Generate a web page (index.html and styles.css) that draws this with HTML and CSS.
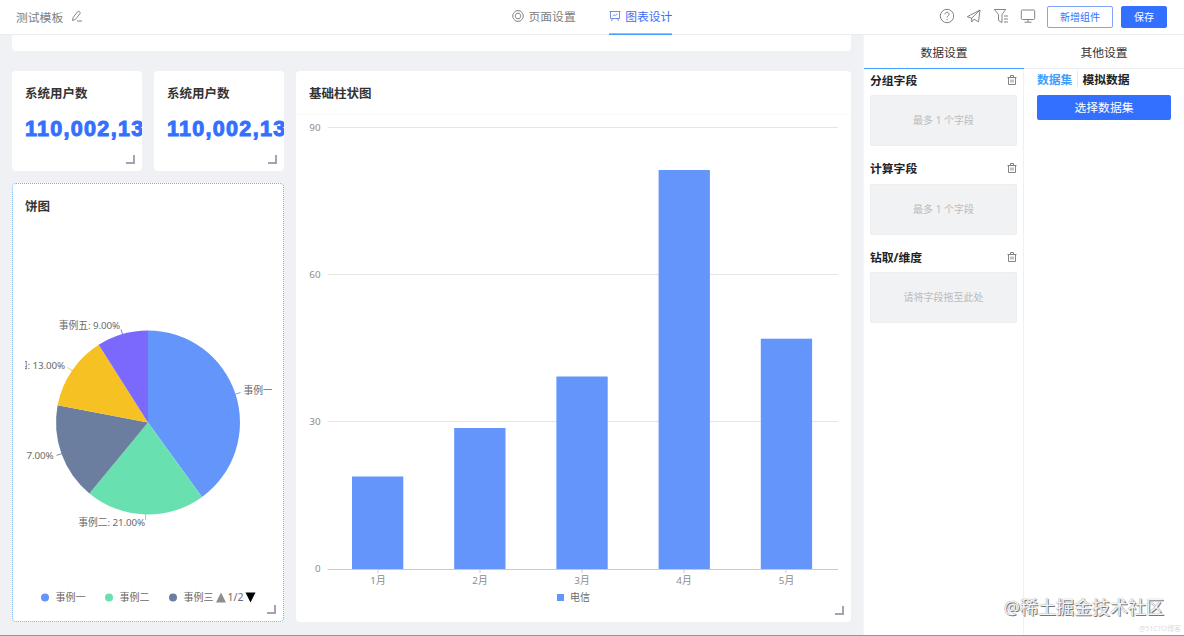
FILE: index.html
```html
<!DOCTYPE html>
<html lang="zh-CN">
<head>
    <meta charset="UTF-8">
    <meta name="viewport" content="width=device-width, initial-scale=1.0">
    <title>测试模板</title>
    <link rel="stylesheet" href="styles.css">
</head>
<body>
    <header class="header">
        <div class="template-name">
            <span>测试模板</span>
            <svg class="icon-edit" viewBox="0 0 12 12"><path d="M1.5 10.5l.7-3.2L6.8 1.5q.5-.5 1.2 0l1 .8q.6.5.1 1.200L4.500 9.300zM6 11h5"/></svg>
        </div>
        <nav class="nav">
            <a class="nav-item">
                <svg viewBox="0 0 12 12"><path d="M3.700.8h4.600l1.200 1.500 1.700 2.200v3L9.500 9.700l-1.200 1.500H3.700L2.500 9.700.8 7.500v-3l1.700-2.200z"/><path d="M4.500 3.300h3L9 6 7.500 8.700h-3L3 6z"/></svg>
                <span>页面设置</span>
            </a>
            <a class="nav-item active">
                <svg viewBox="0 0 12 12"><path d="M.5 1.500h11M1.500 1.500v7h9v-7M3.500 8.500l-1 2.500M8.500 8.500l1 2.500M3.500 6.200l1.700-1.500 1.300 1 2-2"/></svg>
                <span>图表设计</span>
            </a>
        </nav>
        <div class="actions">
            <svg viewBox="0 0 16 16"><circle cx="8" cy="8" r="6.700"/><path d="M5.900 6.300c0-2.700 4.200-2.600 4.200 0 0 1.600-2.100 1.500-2.100 3.200M8 11v1.200"/></svg>
            <svg viewBox="0 0 16 16"><path d="M1.300 8.700L14 2l-1.500 11.800-4.500-2.600-2.300 2.800v-3.800zM5.700 10.200L14 2"/></svg>
            <svg viewBox="0 0 16 16"><path d="M1.300 1.500h11.400L9 6.500v8L5.500 12.500v-6zM11 8h4M11 11h4M11 14h4"/></svg>
            <svg viewBox="0 0 16 16"><rect x="1.300" y="2" width="13.400" height="9.500" rx="1.200"/><path d="M8 11.500V14M4.500 14.200h7"/></svg>
            <button class="btn btn-plain">新增组件</button>
            <button class="btn btn-primary">保存</button>
        </div>
    </header>

    <main class="main">
        <section class="canvas">
            <div class="card card-top"></div>
            <div class="board">
                <div class="card stat">
                    <h3>系统用户数</h3>
                    <p class="stat-value">110,002,13</p>
                    <i class="resize"></i>
                </div>
                <div class="card stat">
                    <h3>系统用户数</h3>
                    <p class="stat-value">110,002,13</p>
                    <i class="resize"></i>
                </div>
                <div class="card pie-card">
                    <h3>饼图</h3>
                    <svg class="pie" viewBox="0 0 247 390">
                        <g transform="translate(123 202.5)">
                            <path class="c1" d="M0 0V-92A92 92 0 0 1 54.1 74.400z"/>
                            <path class="c2" d="M0 0L54.100 74.400A92 92 0 0 1-58.600 70.900z"/>
                            <path class="c3" d="M0 0L-58.600 70.900A92 92 0 0 1-90.400-17.200z"/>
                            <path class="c4" d="M0 0L-90.400-17.200A92 92 0 0 1-49.300-77.700z"/>
                            <path class="c5" d="M0 0L-49.300-77.700A92 92 0 0 1 0-92z"/>
                            <path class="lead l1" d="M87.500-28.400l5-1.600"/>
                            <path class="lead l2" d="M-2.500 92v5.500"/>
                            <path class="lead l3" d="M-86.500 31.300l-5 1.500"/>
                            <path class="lead l4" d="M-76-52l-4.500-3"/>
                            <path class="lead l5" d="M-25.500-88.500l-1.500-4.500"/>
                        </g>
                        <g class="pie-label">
                            <text x="218.500" y="174">事例一</text>
                            <text x="120" y="305.500" text-anchor="end">事例二: 21.00%</text>
                            <text x="28.500" y="239" text-anchor="end">7.00%</text>
                            <text x="40" y="149" text-anchor="end">事例四: 13.00%</text>
                            <text x="95" y="109" text-anchor="end">事例五: 9.00%</text>
                        </g>
                        <g class="legend">
                            <circle class="c1" cx="20" cy="377.500" r="4"/>
                            <text x="30.500" y="381">事例一</text>
                            <circle class="c2" cx="84" cy="377.500" r="4"/>
                            <text x="94.500" y="381">事例二</text>
                            <circle class="c3" cx="148" cy="377.500" r="4"/>
                            <text x="158.500" y="381">事例三</text>
                            <path class="prev" d="M191 382.500l5-10 5 10z"/>
                            <text class="page" x="202.500" y="381">1/2</text>
                            <path class="next" d="M220.500 372.500h10l-5 10z"/>
                        </g>
                    </svg>
                    <i class="resize"></i>
                </div>
                <div class="card bar-card">
                    <h3>基础柱状图</h3>
                    <svg class="bars" viewBox="0 0 555 507">
                        <path class="grid" d="M31.500 12.500H542M31.500 159.500H542M31.500 306.500H542"/>
                        <path class="axis" d="M31.500 454.500H542M82 454v4M184 454v4M286 454v4M388 454v4M490 454v4"/>
                        <g class="c1">
                            <rect x="56" y="361.500" width="51.300" height="92.500"/>
                            <rect x="158.200" y="313" width="51.300" height="141"/>
                            <rect x="260.400" y="261.500" width="51.300" height="192.500"/>
                            <rect x="362.600" y="55" width="51.300" height="399"/>
                            <rect x="464.800" y="223.700" width="51.300" height="230.300"/>
                        </g>
                        <g class="tick" text-anchor="end">
                            <text x="24.500" y="16">90</text>
                            <text x="24.500" y="163">60</text>
                            <text x="24.500" y="310">30</text>
                            <text x="24.500" y="457">0</text>
                        </g>
                        <g class="tick" text-anchor="middle">
                            <text x="82" y="469">1月</text>
                            <text x="184" y="469">2月</text>
                            <text x="286" y="469">3月</text>
                            <text x="388" y="469">4月</text>
                            <text x="490.500" y="469">5月</text>
                        </g>
                        <g class="legend">
                            <rect class="c1" x="261" y="479" width="7" height="7"/>
                            <text x="274" y="486">电信</text>
                        </g>
                    </svg>
                    <i class="resize"></i>
                </div>
            </div>
        </section>

        <aside class="panel">
            <div class="panel-tabs">
                <div class="panel-tab active">数据设置</div>
                <div class="panel-tab">其他设置</div>
            </div>
            <div class="panel-body">
                <div class="fields">
                    <div class="field">
                        <div class="field-head">
                            <span>分组字段</span>
                            <svg viewBox="0 0 10 10"><path d="M.5 2.500h9M3.500 2.500v-2h3v2M1.500 2.500v7h7v-7M4 4.500v3M6 4.500v3"/></svg>
                        </div>
                        <div class="drop">最多 1 个字段</div>
                    </div>
                    <div class="field">
                        <div class="field-head">
                            <span>计算字段</span>
                            <svg viewBox="0 0 10 10"><path d="M.5 2.500h9M3.500 2.500v-2h3v2M1.500 2.500v7h7v-7M4 4.500v3M6 4.500v3"/></svg>
                        </div>
                        <div class="drop">最多 1 个字段</div>
                    </div>
                    <div class="field">
                        <div class="field-head">
                            <span>钻取/维度</span>
                            <svg viewBox="0 0 10 10"><path d="M.5 2.500h9M3.500 2.500v-2h3v2M1.500 2.500v7h7v-7M4 4.500v3M6 4.500v3"/></svg>
                        </div>
                        <div class="drop">请将字段拖至此处</div>
                    </div>
                </div>
                <div class="dataset">
                    <div class="dataset-tabs">
                        <span class="active">数据集</span>
                        <span>模拟数据</span>
                    </div>
                    <button class="btn-dataset">选择数据集</button>
                </div>
            </div>
        </aside>
    </main>
    <div class="watermark">@稀土掘金技术社区</div>
    <div class="watermark-small">@51CTO博客</div>
</body>
</html>
```
FILE: styles.css
```css
* {
    box-sizing: border-box;
}

body {
    margin: 0;
    height: 636px;
    display: flex;
    flex-direction: column;
    overflow: hidden;
    position: relative;
    font-family: "Noto Sans", "Noto Sans CJK SC", sans-serif;
    font-size: 11.8px;
    color: #333;
    background: #fff;
    border-bottom: 1px solid #92959b;
}

svg {
    fill: none;
    stroke: #777;
    stroke-width: .9;
    flex-shrink: 0;
}

h3, p {
    margin: 0;
}

button {
    font-family: inherit;
    padding: 0;
    border-radius: 2px;
}

/* header */
.header {
    height: 35px;
    flex-shrink: 0;
    display: grid;
    grid-template-columns: 512px 1fr auto;
    padding-right: 17px;
    border-bottom: 1px solid #ebecee;
}

.template-name {
    display: flex;
    align-items: center;
    gap: 8px;
    padding: 0 0 3px 16px;
    color: #808080;
}

.icon-edit {
    width: 12px;
    height: 12px;
}

.nav {
    display: flex;
    gap: 33px;
}

.nav-item {
    height: 35px;
    display: flex;
    align-items: center;
    gap: 4.5px;
    padding-bottom: 4px;
    color: #808080;
}

.nav-item svg {
    width: 12px;
    height: 12px;
}

.nav-item.active {
    color: #3f6cf5;
    border-bottom: 1px solid #409eff;
    box-shadow: inset 0 -1px #8fc2ff;
    padding-bottom: 3px;
}

.nav-item.active svg {
    stroke: #6a80e0;
}

.actions {
    display: flex;
    align-items: center;
    gap: 11px;
    padding-bottom: 2px;
}

.actions svg {
    width: 16px;
    height: 16px;
    margin: 0 .4px 1px -.4px;
}

.btn {
    height: 22px;
    width: 66px;
    font-size: 10px;
    padding-bottom: 1px;
    border: 1px solid #80a5fb;
    color: #3370ff;
    background: #fff;
}

.btn-primary {
    width: 46px;
    margin-left: -3px;
    color: #fff;
    background: #3370ff;
    border-color: #3370ff;
}

/* canvas */
.main {
    flex: 1;
    display: flex;
    min-height: 0;
}

.canvas {
    width: 863px;
    padding: 0 12px;
    background: #eff1f5;
}

.card {
    position: relative;
    background: #fff;
    border-radius: 4px;
    overflow: hidden;
}

.card h3 {
    font-size: 12.5px;
    line-height: 18px;
    padding-left: 13px;
}

.card-top {
    height: 16px;
    border-radius: 0 0 4px 4px;
}

.board {
    display: grid;
    grid-template-columns: 130px 130px 555px;
    grid-template-rows: 100px 439px;
    gap: 12px;
    margin-top: 20px;
}

.stat {
    padding-top: 14px;
}

.stat-value {
    padding: 11px 0 0 13px;
    font-family: "Liberation Sans", Arial, sans-serif;
    font-size: 21.5px;
    line-height: 30px;
    font-weight: bold;
    letter-spacing: 1.3px;
    color: #3370ff;
    -webkit-text-stroke: 1px #3370ff;
}

.resize {
    position: absolute;
    right: 7px;
    bottom: 7px;
    width: 9px;
    height: 9px;
    border: solid #a5a2b4;
    border-width: 0 2px 2px 0;
}

.pie-card {
    grid-column: 1 / 3;
    grid-row: 2;
    padding-top: 14px;
    border: 1px dotted #6fb0f5;
}

.pie-card h3 {
    padding-left: 12px;
}

.bar-card {
    grid-column: 3;
    grid-row: 1 / 3;
    padding-top: 14px;
}

.pie {
    display: block;
    width: 247px;
    height: 390px;
    margin: 4px 0 0 12px;
    overflow: hidden;
}

.bars {
    display: block;
    width: 555px;
    height: 508px;
    margin-top: 11px;
    border-top: 1px solid #fafafa;
}

/* charts */
.pie, .bars {
    stroke: none;
}

.c1 { fill: #6395fa; }
.c2 { fill: #68e0af; }
.c3 { fill: #6c7e9f; }
.c4 { fill: #f6c122; }
.c5 { fill: #7b68fd; }

.l1 { stroke: #6395fa; }
.l2 { stroke: #68e0af; }
.l3 { stroke: #6c7e9f; }
.l4 { stroke: #f6c122; }
.l5 { stroke: #7b68fd; }

.pie-label, .legend {
    fill: #6a6a6a;
    font-size: 10px;
}

.pie-label {
    font-size: 9.8px;
    letter-spacing: -.1px;
}

.legend .prev {
    fill: #8e8e8e;
}

.legend .next {
    fill: #000;
}

.legend .page {
    font-size: 10.5px;
}

.tick {
    fill: #8c8c8c;
    font-size: 9.8px;
}

.grid {
    stroke: #e2e2e2;
}

.axis {
    stroke: #c4c4c4;
}

/* right panel */
.panel {
    flex: 1;
    display: flex;
    flex-direction: column;
    border-left: 1px solid #f5f6f8;
}

.panel-tabs {
    display: flex;
    height: 34px;
    border-bottom: 1px solid #ebedf0;
}

.panel-tab {
    flex: 1;
    height: 34px;
    line-height: 34px;
    text-align: center;
}

.panel-tab.active {
    border-bottom: 1px solid #409eff;
}

.panel-body {
    flex: 1;
    display: flex;
}

.fields {
    width: 160px;
    padding: 0 6px;
    border-right: 1px solid #f0f0f0;
}

.field {
    height: 88.5px;
}

.field-head {
    display: flex;
    align-items: center;
    justify-content: space-between;
    height: 26px;
    padding-bottom: 6px;
    font-weight: bold;
    color: #222;
}

.field-head svg {
    width: 10px;
    height: 10px;
    margin-top: 1px;
}

.drop {
    height: 51px;
    line-height: 49px;
    text-align: center;
    font-size: 10px;
    color: #b9bbbe;
    background: #f1f2f3;
    border: 1px solid #eceef0;
    border-radius: 2px;
}

.dataset {
    flex: 1;
    padding: 0 13px;
}

.dataset-tabs {
    display: flex;
    align-items: center;
    height: 26px;
    padding-bottom: 6px;
    line-height: 16px;
    font-weight: bold;
    color: #222;
}

.dataset-tabs .active {
    color: #409eff;
    padding-right: 5px;
    margin-right: 4px;
    border-right: 1px solid #e4e6ea;
}

.btn-dataset {
    width: 134px;
    height: 25px;
    padding-bottom: 2px;
    font-size: 11.8px;
    color: #fff;
    background: #3370ff;
    border: none;
}

/* watermarks */
.watermark {
    position: absolute;
    right: 20px;
    bottom: 15px;
    font-size: 18px;
    line-height: 26px;
    color: #f4f4f4;
    text-shadow: 1px 1px 0 #777, 0 0 1px #777;
}

.watermark-small {
    position: absolute;
    right: 3px;
    bottom: 0;
    font-size: 7px;
    line-height: 12px;
    color: #ddd;
}
```
